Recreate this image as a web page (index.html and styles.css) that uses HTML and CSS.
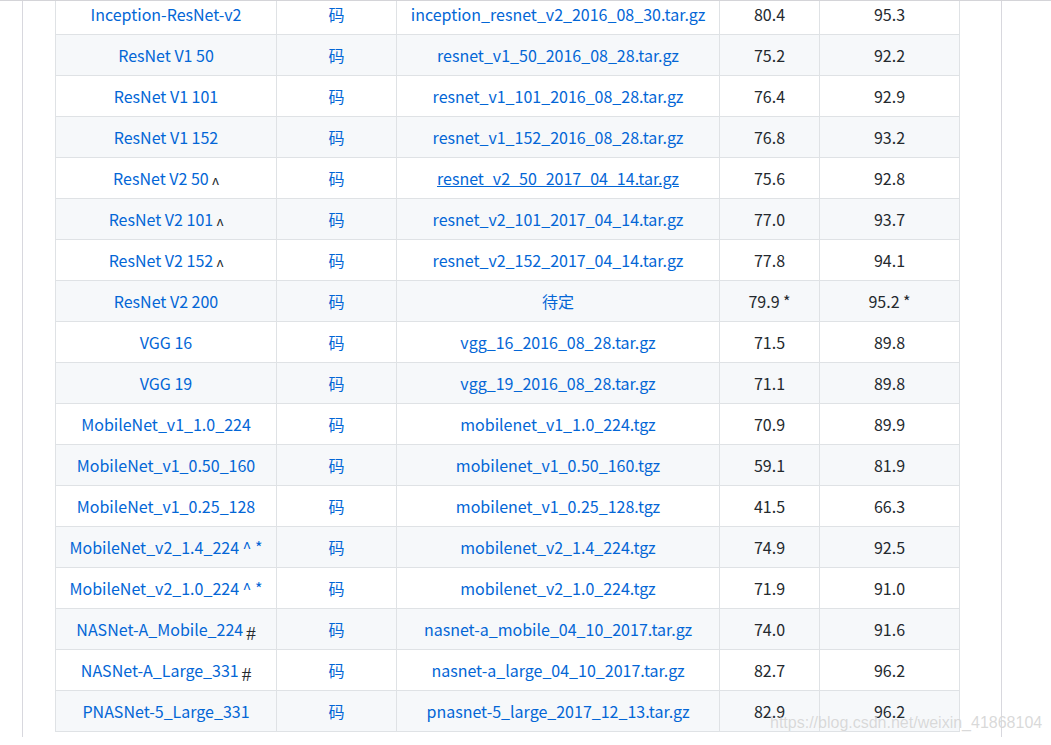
FILE: index.html
```html
<!DOCTYPE html>
<html lang="zh-CN">
<head>
<meta charset="utf-8">
<title>Models</title>
<link rel="stylesheet" href="styles.css">
</head>
<body>
<div class="viewport">
  <div class="article">
    <table class="models">
      <colgroup>
        <col class="c-name"><col class="c-code"><col class="c-ckpt"><col class="c-top1"><col class="c-top5">
      </colgroup>
      <tbody>
        <tr><td><a href="#">Inception-ResNet-v2</a></td><td><a href="#">码</a></td><td><a href="#">inception_resnet_v2_2016_08_30.tar.gz</a></td><td>80.4</td><td>95.3</td></tr>
        <tr class="alt"><td><a href="#">ResNet V1 50</a></td><td><a href="#">码</a></td><td><a href="#">resnet_v1_50_2016_08_28.tar.gz</a></td><td>75.2</td><td>92.2</td></tr>
        <tr><td><a href="#">ResNet V1 101</a></td><td><a href="#">码</a></td><td><a href="#">resnet_v1_101_2016_08_28.tar.gz</a></td><td>76.4</td><td>92.9</td></tr>
        <tr class="alt"><td><a href="#">ResNet V1 152</a></td><td><a href="#">码</a></td><td><a href="#">resnet_v1_152_2016_08_28.tar.gz</a></td><td>76.8</td><td>93.2</td></tr>
        <tr><td><a href="#">ResNet V2 50</a> <span class="caret">ʌ</span></td><td><a href="#">码</a></td><td><a href="#" class="hover">resnet_v2_50_2017_04_14.tar.gz</a></td><td>75.6</td><td>92.8</td></tr>
        <tr class="alt"><td><a href="#">ResNet V2 101</a> <span class="caret">ʌ</span></td><td><a href="#">码</a></td><td><a href="#">resnet_v2_101_2017_04_14.tar.gz</a></td><td>77.0</td><td>93.7</td></tr>
        <tr><td><a href="#">ResNet V2 152</a> <span class="caret">ʌ</span></td><td><a href="#">码</a></td><td><a href="#">resnet_v2_152_2017_04_14.tar.gz</a></td><td>77.8</td><td>94.1</td></tr>
        <tr class="alt"><td><a href="#">ResNet V2 200</a></td><td><a href="#">码</a></td><td><a href="#">待定</a></td><td>79.9 *</td><td>95.2 *</td></tr>
        <tr><td><a href="#">VGG 16</a></td><td><a href="#">码</a></td><td><a href="#">vgg_16_2016_08_28.tar.gz</a></td><td>71.5</td><td>89.8</td></tr>
        <tr class="alt"><td><a href="#">VGG 19</a></td><td><a href="#">码</a></td><td><a href="#">vgg_19_2016_08_28.tar.gz</a></td><td>71.1</td><td>89.8</td></tr>
        <tr><td><a href="#">MobileNet_v1_1.0_224</a></td><td><a href="#">码</a></td><td><a href="#">mobilenet_v1_1.0_224.tgz</a></td><td>70.9</td><td>89.9</td></tr>
        <tr class="alt"><td><a href="#">MobileNet_v1_0.50_160</a></td><td><a href="#">码</a></td><td><a href="#">mobilenet_v1_0.50_160.tgz</a></td><td>59.1</td><td>81.9</td></tr>
        <tr><td><a href="#">MobileNet_v1_0.25_128</a></td><td><a href="#">码</a></td><td><a href="#">mobilenet_v1_0.25_128.tgz</a></td><td>41.5</td><td>66.3</td></tr>
        <tr class="alt"><td><a href="#">MobileNet_v2_1.4_224 ^ *</a></td><td><a href="#">码</a></td><td><a href="#">mobilenet_v2_1.4_224.tgz</a></td><td>74.9</td><td>92.5</td></tr>
        <tr><td><a href="#">MobileNet_v2_1.0_224 ^ *</a></td><td><a href="#">码</a></td><td><a href="#">mobilenet_v2_1.0_224.tgz</a></td><td>71.9</td><td>91.0</td></tr>
        <tr class="alt"><td><a href="#">NASNet-A_Mobile_224</a><span class="hash">#</span></td><td><a href="#">码</a></td><td><a href="#">nasnet-a_mobile_04_10_2017.tar.gz</a></td><td>74.0</td><td>91.6</td></tr>
        <tr><td><a href="#">NASNet-A_Large_331</a><span class="hash">#</span></td><td><a href="#">码</a></td><td><a href="#">nasnet-a_large_04_10_2017.tar.gz</a></td><td>82.7</td><td>96.2</td></tr>
        <tr class="alt"><td><a href="#">PNASNet-5_Large_331</a></td><td><a href="#">码</a></td><td><a href="#">pnasnet-5_large_2017_12_13.tar.gz</a></td><td>82.9</td><td>96.2</td></tr>
      </tbody>
    </table>
  </div>
  <div class="watermark">https://blog.csdn.net/weixin_41868104</div>
</div>
</body>
</html>
```

FILE: styles.css
```css
html, body {
  margin: 0;
  padding: 0;
  background: #fff;
}

body {
  font-family: "Noto Sans CJK SC", "Noto Sans", sans-serif;
  font-size: 16px;
  color: #24292e;
}

.viewport {
  position: relative;
  height: 744px;
  border-top: 1px solid #d4d4d8;
  overflow: hidden;
}

.article {
  box-sizing: border-box;
  width: 980px;
  height: 100%;
  margin-left: 22px;
  padding-left: 32px;
  border-left: 1px solid #d8d8de;
  border-right: 1px solid #d8d8de;
}

.models {
  table-layout: fixed;
  border-collapse: collapse;
  width: 904px;
  margin-top: -8px;
}

.c-name { width: 221px; }
.c-code { width: 120px; }
.c-ckpt { width: 323px; }
.c-top1 { width: 100px; }
.c-top5 { width: 140px; }

.models td {
  border: 1px solid #dfe2e5;
  padding: 8px 6px;
  height: 24px;
  line-height: 24px;
  text-align: center;
  white-space: nowrap;
}

.models tr { background: #fff; }
.models tr.alt { background: #f6f8fa; }

.models a {
  color: #0366d6;
  text-decoration: none;
}

.models a.hover {
  text-decoration: underline;
}

.caret {
  font-size: 13px;
  line-height: 0;
  color: #24292e;
}

.hash {
  font-family: "Liberation Serif", serif;
  font-size: 19px;
  line-height: 0;
  color: #24292e;
  vertical-align: -4px;
  margin-left: 3px;
}

.watermark {
  position: absolute;
  left: 770px;
  top: 713px;
  font-family: "Liberation Sans", Arial, sans-serif;
  font-size: 16px;
  color: rgba(180, 180, 180, 0.5);
  text-shadow: 0 0 1px rgba(255, 255, 255, 0.8);
  white-space: nowrap;
}
```
